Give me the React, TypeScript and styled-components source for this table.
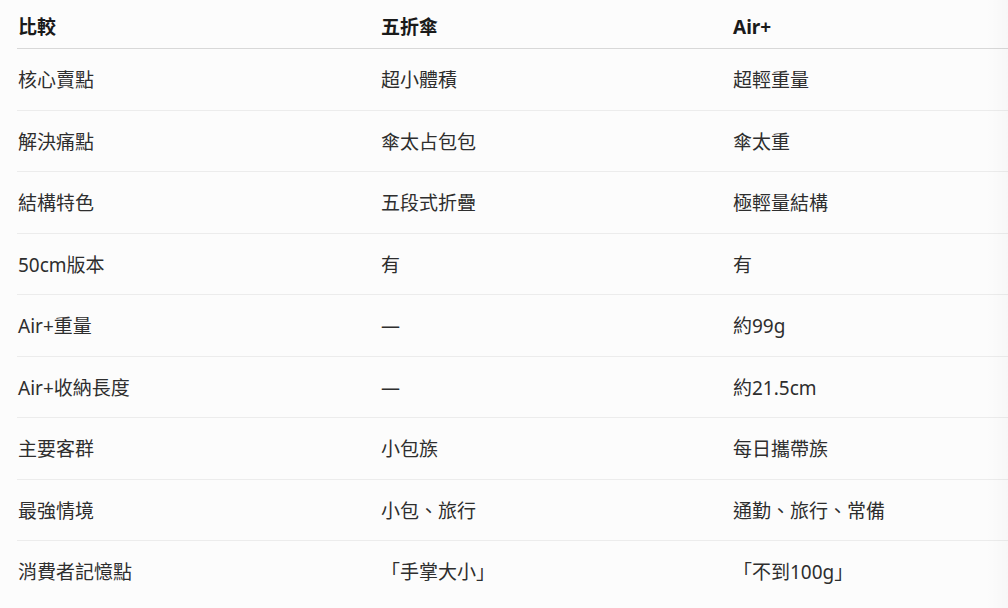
import React from 'react';
import styled, { createGlobalStyle } from 'styled-components';

const GlobalStyle = createGlobalStyle`
  html, body {
    margin: 0;
    padding: 0;
    background: #fcfcfc;
  }
  body {
    font-family: 'Noto Sans', 'Noto Sans CJK TC', sans-serif;
    overflow: hidden;
  }
`;

const Page = styled.div`
  position: relative;
  width: 1008px;
  height: 608px;
  padding-left: 17px;
  box-sizing: border-box;
  overflow: hidden;
`;

const Table = styled.div`
  display: grid;
  grid-template-columns: 363px 352px 1fr;
`;

const HeadCell = styled.div`
  padding: 14px 0 8px 1px;
  line-height: 26px;
  font-size: 19px;
  font-weight: 700;
  color: #1a1a1a;
  border-bottom: 1px solid #d8d8d8;
`;

const Cell = styled.div<{ $last?: boolean }>`
  padding: 19px 0 17px 1px;
  line-height: 24.5px;
  font-size: 19px;
  color: #2e2e2e;
  border-bottom: 1px solid ${(p) => (p.$last ? 'transparent' : '#ececec')};
  white-space: nowrap;
  text-spacing-trim: space-all;
`;

const EdgeFade = styled.div`
  position: absolute;
  top: 0;
  right: 0;
  width: 22px;
  height: 100%;
  background: linear-gradient(to right, rgba(0, 0, 0, 0), rgba(0, 0, 0, 0.018));
  pointer-events: none;
`;

const headers = ['比較', '五折傘', 'Air+'];

const rows: string[][] = [
  ['核心賣點', '超小體積', '超輕重量'],
  ['解決痛點', '傘太占包包', '傘太重'],
  ['結構特色', '五段式折疊', '極輕量結構'],
  ['50cm版本', '有', '有'],
  ['Air+重量', '—', '約99g'],
  ['Air+收納長度', '—', '約21.5cm'],
  ['主要客群', '小包族', '每日攜帶族'],
  ['最強情境', '小包、旅行', '通勤、旅行、常備'],
  ['消費者記憶點', '「手掌大小」', '「不到100g」'],
];

const App = () => {
  return (
    <>
      <GlobalStyle />
      <Page>
        <Table>
          {headers.map((h) => (
            <HeadCell key={h}>{h}</HeadCell>
          ))}
          {rows.map((row, i) =>
            row.map((text, j) => (
              <Cell key={`${i}-${j}`} $last={i === rows.length - 1}>
                {text}
              </Cell>
            ))
          )}
        </Table>
        <EdgeFade />
      </Page>
    </>
  );
};

export default App;
